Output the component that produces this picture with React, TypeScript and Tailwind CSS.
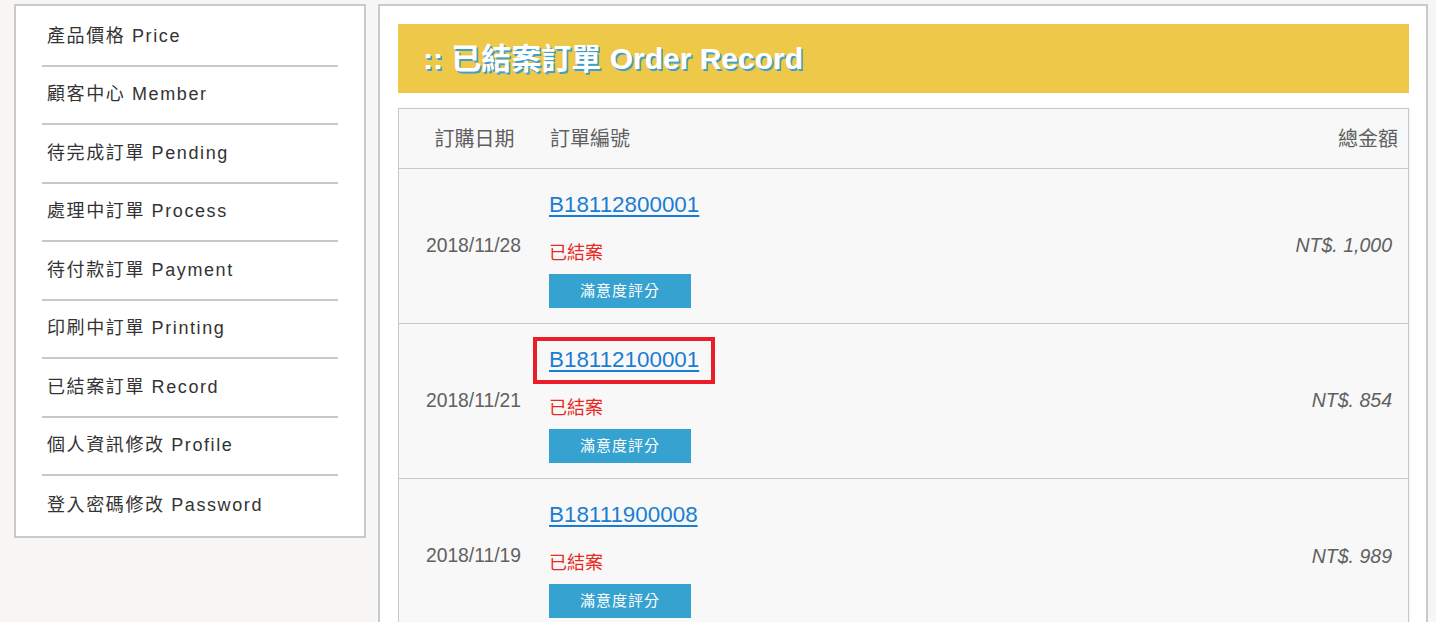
import React from "react";

const menu = [
  "產品價格 Price",
  "顧客中心 Member",
  "待完成訂單 Pending",
  "處理中訂單 Process",
  "待付款訂單 Payment",
  "印刷中訂單 Printing",
  "已結案訂單 Record",
  "個人資訊修改 Profile",
  "登入密碼修改 Password",
];

const orders = [
  { date: "2018/11/28", no: "B18112800001", amount: "NT$. 1,000", mark: false },
  { date: "2018/11/21", no: "B18112100001", amount: "NT$. 854", mark: true },
  { date: "2018/11/19", no: "B18111900008", amount: "NT$. 989", mark: false },
];

const font = {
  fontFamily: '"Liberation Sans", Arial, "Noto Sans CJK TC", sans-serif',
};

export default function App() {
  return (
    <div
      className="flex items-start gap-[12px] bg-[#f7f6f4] pl-[14px] pt-[4px] w-[1436px] h-[622px] overflow-hidden"
      style={font}
    >
      {/* Sidebar */}
      <div className="w-[352px] shrink-0 border-2 border-[#cacaca] bg-white pt-[2px] pb-[1px] px-[26px]">
        {menu.map((m, i) => (
          <div
            key={m}
            className={`h-[58.5px] flex items-center pl-[5px] text-[18px] tracking-[1.6px] text-[#333] ${
              i < menu.length - 1 ? "border-b-2 border-[#c8c8c8]" : ""
            }`}
          >
            {m}
          </div>
        ))}
      </div>

      {/* Main panel */}
      <div className="w-[1050px] h-[640px] shrink-0 border-2 border-[#cacaca] bg-white pt-[18px] pl-[18px] pr-[17px]">
        <div className="h-[69px] bg-[#eec849] flex items-center pl-[25px]">
          <h1
            className="text-[30px] font-bold text-white tracking-[0px]"
            style={{ textShadow: "1.5px 1.5px 0 #3f9fcf" }}
          >
            :: 已結案訂單 Order Record
          </h1>
        </div>

        <div className="mt-[15px] border border-[#c8c8c8] bg-[#f8f8f8] shadow-[1px_0_2px_rgba(0,0,0,0.06)]">
          {/* header */}
          <div className="h-[60px] flex items-center text-[20px] text-[#5f5f5f] border-b border-[#c8c8c8]">
            <div className="w-[151px] text-center">訂購日期</div>
            <div className="flex-1">訂單編號</div>
            <div className="pr-[10px]">總金額</div>
          </div>

          {orders.map((o, i) => (
            <div
              key={o.no}
              className={`h-[155px] flex items-center ${
                i < orders.length - 1 ? "border-b border-[#c8c8c8]" : ""
              }`}
            >
              <div className="w-[151px] pr-[2px] text-center text-[19.3px] text-[#606060]">
                {o.date}
              </div>
              <div className="flex-1 self-start pt-[21px] flex flex-col items-start -ml-[1px]">
                <div className="relative h-[30px] leading-[30px]">
                  <a
                    href="#"
                    className="text-[22.4px] text-[#1a7dd2] underline underline-offset-[3px] decoration-[2px]"
                  >
                    {o.no}
                  </a>
                  {o.mark && (
                    <div className="absolute left-[-16px] top-[-8px] w-[182px] h-[47px] border-[4px] border-[#ea1d28]" />
                  )}
                </div>
                <div className="mt-[21px] h-[24px] leading-[24px] text-[18px] text-[#e8291f]">
                  已結案
                </div>
                <button className="mt-[9px] w-[142px] h-[34px] bg-[#36a2d0] text-white text-[15px] tracking-[1px] flex items-center justify-center">
                  滿意度評分
                </button>
              </div>
              <div className="pr-[16px] text-[19.5px] italic text-[#606060]">
                {o.amount}
              </div>
            </div>
          ))}
        </div>
      </div>
    </div>
  );
}
